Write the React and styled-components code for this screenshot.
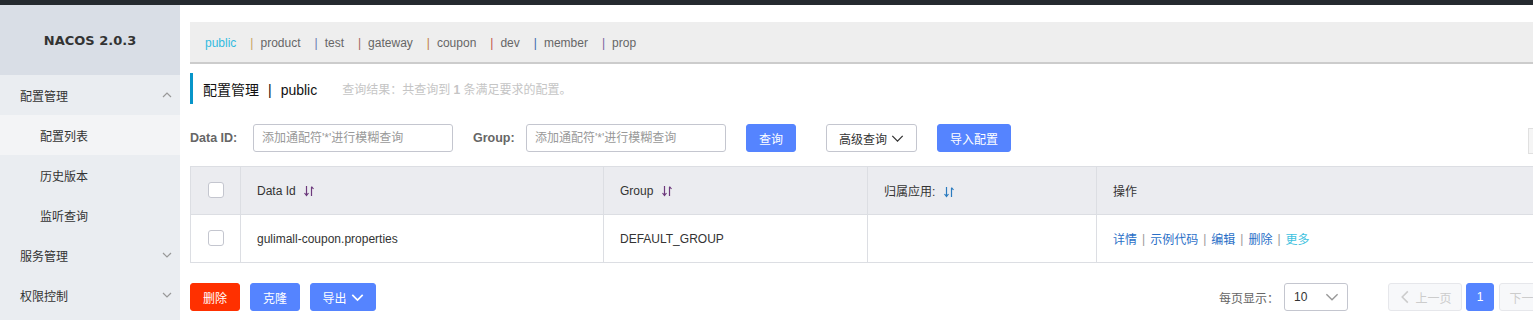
import React from "react";
import styled, { createGlobalStyle } from "styled-components";

const GlobalStyle = createGlobalStyle`
  html, body {
    margin: 0;
    padding: 0;
    background: #fff;
    font-family: "Liberation Sans", "Noto Sans CJK SC", sans-serif;
    font-size: 12px;
    color: #333;
  }
  #root {
    width: 1533px;
    height: 320px;
    overflow: hidden;
  }
`;

const namespaces = [
  { name: "public", bar: null },
  { name: "product", bar: "#c9a15f" },
  { name: "test", bar: "#6b77b0" },
  { name: "gateway", bar: "#a4675c" },
  { name: "coupon", bar: "#c07a42" },
  { name: "dev", bar: "#c2564b" },
  { name: "member", bar: "#3d68ad" },
  { name: "prop", bar: "#76659f" },
];

const menu = [
  { label: "配置管理", level: 0, arrow: "up" },
  { label: "配置列表", level: 1, active: true },
  { label: "历史版本", level: 1 },
  { label: "监听查询", level: 1 },
  { label: "服务管理", level: 0, arrow: "down" },
  { label: "权限控制", level: 0, arrow: "down" },
];

const CHEVRONS = {
  up: "M1 7 L5 3 L9 7",
  down: "M1 3 L5 7 L9 3",
  left: "M7 1 L3 5 L7 9",
  right: "M3 1 L7 5 L3 9",
};

function Chevron({ dir = "down", size = 10, color = "#999", weight = 1.2 }) {
  return (
    <svg width={size} height={size} viewBox="0 0 10 10">
      <path d={CHEVRONS[dir]} fill="none" stroke={color} strokeWidth={weight} />
    </svg>
  );
}

function SortIcon({ color }) {
  return (
    <svg width="12" height="14" viewBox="0 0 12 14">
      <path d="M3.5 2 V11 M1.5 9 L3.5 11.5 L5.5 9" fill="none" stroke={color} strokeWidth="1.2" />
      <path d="M8.5 12 V3 M8.5 2.5 L10.5 5" fill="none" stroke={color} strokeWidth="1.2" />
    </svg>
  );
}

export default function App() {
  return (
    <>
      <GlobalStyle />
      <Page>
        <TopBar />
        <Body>
          <Sidebar>
            <Brand>NACOS 2.0.3</Brand>
            {menu.map((m) => (
              <MenuItem key={m.label} $level={m.level} $active={m.active}>
                <span>{m.label}</span>
                {m.arrow && <Chevron dir={m.arrow} size={10} color="#999" />}
              </MenuItem>
            ))}
          </Sidebar>
          <Main>
            <NamespaceBar>
              {namespaces.map((n, i) => (
                <Namespace key={n.name} $active={i === 0}>
                  {n.bar && <Bar $color={n.bar}>|</Bar>}
                  {n.name}
                </Namespace>
              ))}
            </NamespaceBar>

            <TitleRow>
              <Title>
                配置管理<TitleSep>|</TitleSep>public
              </Title>
              <ResultInfo>
                查询结果：共查询到 <b>1</b> 条满足要求的配置。
              </ResultInfo>
            </TitleRow>

            <SearchRow>
              <Label $width={63}>Data ID:</Label>
              <Input placeholder="添加通配符'*'进行模糊查询" />
              <Label $width={53} $gap>Group:</Label>
              <Input placeholder="添加通配符'*'进行模糊查询" />
              <Button $primary $width={50} $ml={20}>查询</Button>
              <Button $width={91} $ml={30}>
                高级查询 <Chevron dir="down" size={13} color="#333" weight={1} />
              </Button>
              <Button $primary $width={74} $ml={20}>导入配置</Button>
              <EdgeBox />
            </SearchRow>

            <Table>
              <thead>
                <tr>
                  <Th $w={50} $center>
                    <Checkbox />
                  </Th>
                  <Th $w={363}>
                    Data Id <SortIcon color="#6d3a7d" />
                  </Th>
                  <Th $w={264}>
                    Group <SortIcon color="#6d3a7d" />
                  </Th>
                  <Th $w={229}>
                    归属应用: <SortIcon color="#2b7bbf" />
                  </Th>
                  <Th>操作</Th>
                </tr>
              </thead>
              <tbody>
                <tr>
                  <Td $center>
                    <Checkbox />
                  </Td>
                  <Td>gulimall-coupon.properties</Td>
                  <Td>DEFAULT_GROUP</Td>
                  <Td />
                  <Td>
                    <Actions>
                      <Link>详情</Link>
                      <ActionSep>|</ActionSep>
                      <Link>示例代码</Link>
                      <ActionSep>|</ActionSep>
                      <Link>编辑</Link>
                      <ActionSep>|</ActionSep>
                      <Link>删除</Link>
                      <ActionSep>|</ActionSep>
                      <Link $light>更多</Link>
                    </Actions>
                  </Td>
                </tr>
              </tbody>
            </Table>

            <Footer>
              <Button $danger $width={50}>删除</Button>
              <Button $primary $width={50} $ml={10}>克隆</Button>
              <Button $primary $width={66} $ml={10}>
                导出 <Chevron dir="down" size={13} color="#fff" weight={1.3} />
              </Button>
              <Filler />
              <PageSizeLabel>每页显示：</PageSizeLabel>
              <Select>
                <span>10</span>
                <Chevron dir="down" size={14} color="#999" weight={1} />
              </Select>
              <PageButton $width={74} $ml={40} disabled>
                <Chevron dir="left" size={14} color="#ccc" weight={1.1} />
                上一页
              </PageButton>
              <PageButton $current $width={28} $ml={4}>1</PageButton>
              <PageButton $width={74} $ml={5} disabled>
                下一页
                <Chevron dir="right" size={14} color="#ccc" weight={1.1} />
              </PageButton>
            </Footer>
          </Main>
        </Body>
      </Page>
    </>
  );
}

// styled components

const Page = styled.div`
  display: flex;
  flex-direction: column;
  width: 1533px;
  height: 320px;
  overflow: hidden;
`;

const TopBar = styled.div`
  height: 5px;
  background: #252a2f;
  flex-shrink: 0;
`;

const Body = styled.div`
  display: flex;
  flex: 1;
`;

const Sidebar = styled.aside`
  width: 180px;
  flex-shrink: 0;
  background: #eaedf1;
  display: flex;
  flex-direction: column;
`;

const Brand = styled.div`
  height: 70px;
  background: #d9dee6;
  display: flex;
  align-items: center;
  justify-content: center;
  font-family: "DejaVu Sans", sans-serif;
  font-weight: bold;
  font-size: 13px;
  color: #333;
`;

const MenuItem = styled.div`
  height: 40px;
  display: flex;
  align-items: center;
  justify-content: space-between;
  padding: 1px 8px 0 ${(p) => (p.$level ? 40 : 20)}px;
  box-sizing: border-box;
  font-size: 12px;
  color: #333;
  background: ${(p) => (p.$active ? "#f3f4f6" : "transparent")};
  svg {
    margin-top: -2px;
  }
`;

const Main = styled.main`
  flex-shrink: 0;
  width: 1383px;
  padding: 17px 0 0 10px;
`;

const NamespaceBar = styled.div`
  height: 42px;
  box-sizing: border-box;
  background: #eee;
  border-bottom: 2px solid #ccc;
  display: flex;
  align-items: center;
  padding: 2px 0 0 15px;
  width: 1400px;
`;

const Namespace = styled.span`
  color: ${(p) => (p.$active ? "#33bbe0" : "#666")};
  margin-right: 14px;
  font-size: 12px;
`;

const Bar = styled.span`
  color: ${(p) => p.$color};
  margin-right: 7px;
`;

const TitleRow = styled.div`
  margin-top: 9px;
  height: 31px;
  border-left: 3px solid #0795c9;
  display: flex;
  align-items: center;
  padding-left: 10px;
`;

const Title = styled.div`
  font-size: 14px;
  color: #111;
`;

const TitleSep = styled.span`
  margin: 0 9px;
`;

const ResultInfo = styled.div`
  margin-left: 25px;
  font-size: 12px;
  color: #c5c5c5;
  b {
    font-weight: bold;
  }
`;

const SearchRow = styled.div`
  margin-top: 20px;
  height: 28px;
  display: flex;
  align-items: center;
  position: relative;
`;

const Label = styled.label`
  width: ${(p) => p.$width}px;
  flex-shrink: 0;
  font-weight: bold;
  font-size: 12.5px;
  color: #666;
  margin-left: ${(p) => (p.$gap ? 20 : 0)}px;
`;

const Input = styled.input`
  width: 200px;
  height: 28px;
  box-sizing: border-box;
  border: 1px solid #c4c6cf;
  border-radius: 3px;
  padding: 0 8px;
  font-family: "Liberation Sans", "Noto Sans CJK SC", sans-serif;
  font-size: 12px;
  outline: none;
  &::placeholder {
    color: #999;
  }
`;

const Button = styled.button`
  width: ${(p) => p.$width}px;
  height: 28px;
  margin-left: ${(p) => p.$ml || 0}px;
  box-sizing: border-box;
  border-radius: 3px;
  font-family: "Liberation Sans", "Noto Sans CJK SC", sans-serif;
  font-size: 12px;
  padding: 0;
  display: inline-flex;
  align-items: center;
  justify-content: center;
  gap: 4px;
  cursor: pointer;
  flex-shrink: 0;
  border: 1px solid
    ${(p) => (p.$danger ? "#ff3000" : p.$primary ? "#5584ff" : "#c4c6cf")};
  background: ${(p) => (p.$danger ? "#ff3000" : p.$primary ? "#5584ff" : "#fff")};
  color: ${(p) => (p.$danger || p.$primary ? "#fff" : "#333")};
`;

const EdgeBox = styled.div`
  position: absolute;
  left: 1338px;
  top: 4px;
  width: 20px;
  height: 24px;
  border: 1px solid #e0e0e0;
  background: #f5f5f5;
`;

const Table = styled.table`
  margin-top: 14px;
  width: 1400px;
  border-collapse: collapse;
  table-layout: fixed;
  border: 1px solid #dcdee3;
`;

const Th = styled.th`
  width: ${(p) => (p.$w ? `${p.$w}px` : "auto")};
  height: 48px;
  box-sizing: border-box;
  background: #ebecf0;
  border: 1px solid #dcdee3;
  text-align: ${(p) => (p.$center ? "center" : "left")};
  padding: ${(p) => (p.$center ? "0" : "0 16px")};
  font-weight: normal;
  font-size: 12px;
  color: #333;
  vertical-align: middle;
  svg {
    vertical-align: -3px;
    margin-left: 4px;
  }
`;

const Td = styled.td`
  height: 48px;
  box-sizing: border-box;
  border: 1px solid #dcdee3;
  text-align: ${(p) => (p.$center ? "center" : "left")};
  padding: ${(p) => (p.$center ? "0" : "0 16px")};
  font-size: 12px;
  color: #333;
  vertical-align: middle;
`;

const Checkbox = styled.span`
  display: inline-block;
  width: 16px;
  height: 16px;
  box-sizing: border-box;
  border: 1px solid #c4c6cf;
  border-radius: 3px;
  background: #fff;
  vertical-align: middle;
  margin-top: -2px;
`;

const Actions = styled.div`
  display: flex;
  align-items: center;
`;

const Link = styled.a`
  color: ${(p) => (p.$light ? "#3ec2e0" : "#2a6fc7")};
  cursor: pointer;
`;

const ActionSep = styled.span`
  color: #999;
  margin: 0 5px;
`;

const Footer = styled.div`
  margin-top: 20px;
  height: 28px;
  display: flex;
  align-items: center;
`;

const Filler = styled.div`
  flex: 1;
`;

const PageSizeLabel = styled.span`
  color: #666;
  font-size: 12px;
  margin-right: 5px;
`;

const Select = styled.div`
  width: 64px;
  height: 28px;
  box-sizing: border-box;
  border: 1px solid #c4c6cf;
  border-radius: 3px;
  display: flex;
  align-items: center;
  justify-content: space-between;
  padding: 0 8px 0 9px;
  color: #333;
  font-size: 12px;
`;

const PageButton = styled.button`
  width: ${(p) => p.$width}px;
  height: 28px;
  margin-left: ${(p) => p.$ml || 0}px;
  flex-shrink: 0;
  box-sizing: border-box;
  border-radius: 3px;
  padding: 0;
  display: inline-flex;
  align-items: center;
  justify-content: center;
  gap: 3px;
  font-family: "Liberation Sans", "Noto Sans CJK SC", sans-serif;
  font-size: 12px;
  border: 1px solid ${(p) => (p.$current ? "#5584ff" : "#e6e7eb")};
  background: ${(p) => (p.$current ? "#5584ff" : "#f7f8fa")};
  color: ${(p) => (p.$current ? "#fff" : "#ccc")};
`;
